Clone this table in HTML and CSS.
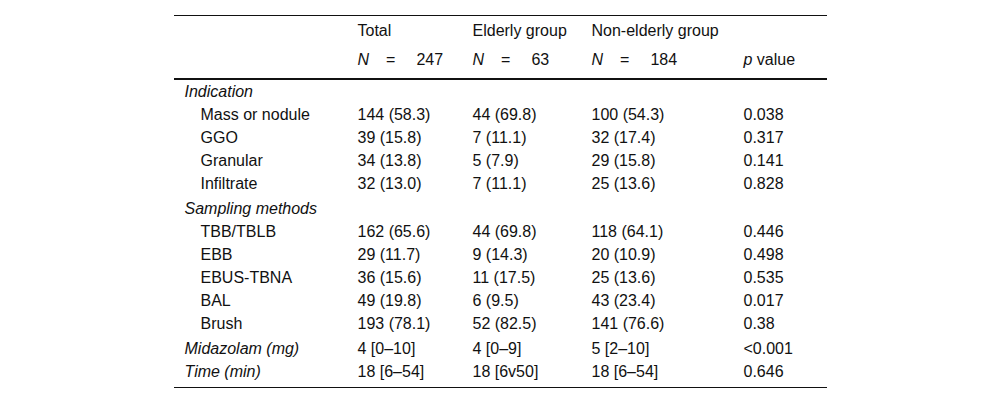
FILE: index.html
```html
<!DOCTYPE html>
<html>
<head>
<meta charset="utf-8">
<link rel="stylesheet" href="styles.css">
</head>
<body>
<table class="data">
  <colgroup>
    <col class="c1"><col class="c2"><col class="c3"><col class="c4"><col class="c5">
  </colgroup>
  <thead>
    <tr class="h1">
      <th></th><th>Total</th><th>Elderly group</th><th>Non-elderly group</th><th></th>
    </tr>
    <tr class="h2">
      <th></th>
      <th><i>N</i><span class="eq">=</span>247</th>
      <th><i>N</i><span class="eq">=</span>63</th>
      <th><i>N</i><span class="eq">=</span>184</th>
      <th><i>p</i> value</th>
    </tr>
  </thead>
  <tbody>
    <tr><td class="grp"><i>Indication</i></td><td></td><td></td><td></td><td></td></tr>
    <tr><td class="ind">Mass or nodule</td><td>144 (58.3)</td><td>44 (69.8)</td><td>100 (54.3)</td><td>0.038</td></tr>
    <tr><td class="ind">GGO</td><td>39 (15.8)</td><td>7 (11.1)</td><td>32 (17.4)</td><td>0.317</td></tr>
    <tr><td class="ind">Granular</td><td>34 (13.8)</td><td>5 (7.9)</td><td>29 (15.8)</td><td>0.141</td></tr>
    <tr><td class="ind">Infiltrate</td><td>32 (13.0)</td><td>7 (11.1)</td><td>25 (13.6)</td><td>0.828</td></tr>
    <tr class="sec"><td class="grp"><i>Sampling methods</i></td><td></td><td></td><td></td><td></td></tr>
    <tr><td class="ind">TBB/TBLB</td><td>162 (65.6)</td><td>44 (69.8)</td><td>118 (64.1)</td><td>0.446</td></tr>
    <tr><td class="ind">EBB</td><td>29 (11.7)</td><td>9 (14.3)</td><td>20 (10.9)</td><td>0.498</td></tr>
    <tr><td class="ind">EBUS-TBNA</td><td>36 (15.6)</td><td>11 (17.5)</td><td>25 (13.6)</td><td>0.535</td></tr>
    <tr><td class="ind">BAL</td><td>49 (19.8)</td><td>6 (9.5)</td><td>43 (23.4)</td><td>0.017</td></tr>
    <tr><td class="ind">Brush</td><td>193 (78.1)</td><td>52 (82.5)</td><td>141 (76.6)</td><td>0.38</td></tr>
    <tr class="sec"><td class="grp"><i>Midazolam (mg)</i></td><td>4 [0–10]</td><td>4 [0–9]</td><td>5 [2–10]</td><td>&lt;0.001</td></tr>
    <tr class="last"><td class="grp"><i>Time (min)</i></td><td>18 [6–54]</td><td>18 [6v50]</td><td>18 [6–54]</td><td>0.646</td></tr>
  </tbody>
</table>
</body>
</html>
```

FILE: styles.css
```css
html, body {
  margin: 0;
  padding: 0;
  background: #fff;
}
body {
  font-family: "Liberation Sans", Arial, sans-serif;
  font-size: 16px;
  color: #111;
}
.data {
  width: 653px;
  margin: 15px auto 0;
  border-collapse: collapse;
  table-layout: fixed;
  border-top: 1px solid #111;
  border-bottom: 1px solid #111;
}
.c1 { width: 173px; }
.c2 { width: 115px; }
.c3 { width: 119px; }
.c4 { width: 152px; }
.c5 { width: 94px; }
.data th {
  font-weight: normal;
  text-align: left;
  padding: 0 11px;
  line-height: 18px;
  white-space: nowrap;
}
.h1 th {
  padding-top: 6px;
  padding-bottom: 6px;
}
.h2 th {
  padding-top: 5px;
  padding-bottom: 9px;
  border-bottom: 2px solid #111;
}
.eq {
  display: inline-block;
  margin: 0 21px 0 17px;
}
.data td {
  padding: 2px 11px;
  line-height: 19px;
  white-space: nowrap;
  vertical-align: middle;
}
.data td.ind {
  padding-left: 27px;
}
.sec td {
  padding-top: 4px;
}
.last td {
  padding-bottom: 6px;
}
```
